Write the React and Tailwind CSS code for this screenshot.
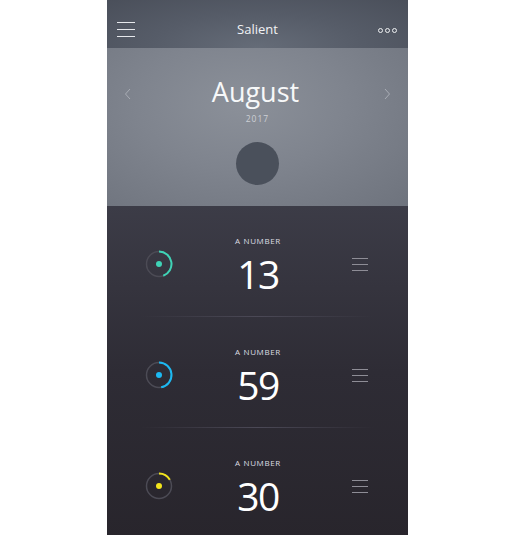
import React from "react";

const rows = [
  { value: "13", color: "#3fd3b6", angle: 160 },
  { value: "59", color: "#1cb9f2", angle: 170 },
  { value: "30", color: "#f3e51c", angle: 60 },
];

const Ring = ({ color, angle }) => {
  const r = 12.5;
  const rad = (angle * Math.PI) / 180;
  const x = 15 + r * Math.sin(rad);
  const y = 15 - r * Math.cos(rad);
  return (
    <svg width="30" height="30" viewBox="0 0 30 30">
      <circle cx="15" cy="15" r={r} fill="none" stroke="#4c4b55" strokeWidth="1.5" />
      <path
        d={`M15 2.5 A${r} ${r} 0 ${angle > 180 ? 1 : 0} 1 ${x} ${y}`}
        fill="none"
        stroke={color}
        strokeWidth="2"
      />
      <circle cx="15" cy="15" r="3" fill={color} />
    </svg>
  );
};

const Lines = ({ w, gap, color }) => (
  <div className="flex flex-col" style={{ gap }}>
    <div className="h-px" style={{ width: w, background: color }} />
    <div className="h-px" style={{ width: w, background: color }} />
    <div className="h-px" style={{ width: w, background: color }} />
  </div>
);

export default function App() {
  return (
    <div className="w-[513px] h-[535px] bg-white overflow-hidden" style={{ fontFamily: '"Open Sans", "Noto Sans", sans-serif' }}>
      <div className="ml-[107px] w-[301px] h-[535px] flex flex-col overflow-hidden bg-[#2b2830]">
        {/* header */}
        <div className="h-[48px] shrink-0 flex items-center px-[10px] pt-[11px] bg-[radial-gradient(ellipse_at_50%_100%,#656c78_0%,#565c68_50%,#4a4f5a_100%)]">
          <div className="w-[40px]">
            <Lines w="18px" gap="6px" color="#e6e8ec" />
          </div>
          <div className="flex-1 text-center text-[13px] text-[#f1f2f4]">Salient</div>
          <div className="w-[40px] flex justify-end gap-[2px] pr-[1px] pt-[1px]">
            <span className="w-[5px] h-[5px] rounded-full border border-[#eef0f2]" />
            <span className="w-[5px] h-[5px] rounded-full border border-[#eef0f2]" />
            <span className="w-[5px] h-[5px] rounded-full border border-[#eef0f2]" />
          </div>
        </div>

        {/* month */}
        <div className="h-[158px] shrink-0 flex flex-col items-center bg-[radial-gradient(ellipse_at_45%_35%,#8b9099_0%,#7f848e_45%,#6e737d_100%)]">
          <div className="w-full flex items-center justify-between px-[17px] mt-[27px]">
            <svg width="8" height="12" viewBox="0 0 8 12" className="mt-[4px]">
              <path d="M6 1 L1.5 6 L6 11" fill="none" stroke="#a9adb5" strokeWidth="1" />
            </svg>
            <div className="text-[27px] leading-[34px] text-[#f7f8f9] -ml-[4px]">August</div>
            <svg width="8" height="12" viewBox="0 0 8 12" className="mt-[4px]">
              <path d="M2 1 L6.5 6 L2 11" fill="none" stroke="#a9adb5" strokeWidth="1" />
            </svg>
          </div>
          <div className="text-[8.5px] leading-[12px] tracking-[0.12em] text-[#cdd0d5] mt-[4px]">2017</div>
          <div className="w-[43px] h-[43px] rounded-full bg-[#4a505b] mt-[17px]" />
        </div>

        {/* rows */}
        <div className="flex-1 bg-linear-to-b from-[#3c3c47] via-[#2e2c35] to-[#28252c]">
          {rows.map((row, i) => (
            <div key={i} className="h-[111px] shrink-0 flex flex-col">
              <div className="flex-1 grid grid-cols-[104px_94px_1fr] items-start">
                <div className="flex justify-center mt-[43px]">
                  <Ring color={row.color} angle={row.angle} />
                </div>
                <div className="flex flex-col items-center mt-[30px]">
                  <div className="text-[8px] tracking-[0.08em] text-[#dcdee2] leading-[10px]">A NUMBER</div>
                  <div className="text-[39px] leading-[46px] tracking-[-0.04em] text-white mt-[5px]">{row.value}</div>
                </div>
                <div className="pl-[47px] mt-[52px]">
                  <Lines w="16px" gap="5px" color="#8e8d96" />
                </div>
              </div>
              {i < 2 && <div className="mx-[34px] h-px bg-linear-to-r from-transparent via-[#4b4956] to-transparent" />}
            </div>
          ))}
        </div>
      </div>
    </div>
  );
}
